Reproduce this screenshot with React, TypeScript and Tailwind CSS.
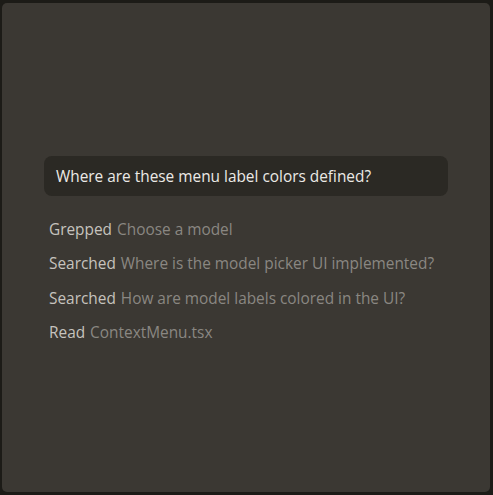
const steps = [
  { verb: "Grepped", detail: "Choose a model" },
  { verb: "Searched", detail: "Where is the model picker UI implemented?" },
  { verb: "Searched", detail: "How are model labels colored in the UI?" },
  { verb: "Read", detail: "ContextMenu.tsx" },
];

export default function App() {
  return (
    <div className="w-[493px] h-[495px] bg-[#1c1b17] pt-[3px] pl-[2px] pr-[3px] pb-[3px] font-['Open_Sans',sans-serif]">
      <div className="h-full rounded-[5px] bg-[#3b3833] flex flex-col justify-center pl-[42px] pr-[42px] pt-[5px]">
        <div className="h-[40px] rounded-[8px] bg-[#2b2924] flex items-center px-[12px] text-[15.4px] text-[#ebe9e6]">
          Where are these menu label colors defined?
        </div>
        <div className="mt-[22px] flex flex-col gap-[12.4px] pl-[5px] text-[15.4px]">
          {steps.map((s, i) => (
            <div key={i} className="h-[22px] flex items-center whitespace-nowrap">
              <span className="text-[#c6c3be]">{s.verb}</span>
              <span className="ml-[5px] text-[#8a8782]">{s.detail}</span>
            </div>
          ))}
        </div>
      </div>
    </div>
  );
}
